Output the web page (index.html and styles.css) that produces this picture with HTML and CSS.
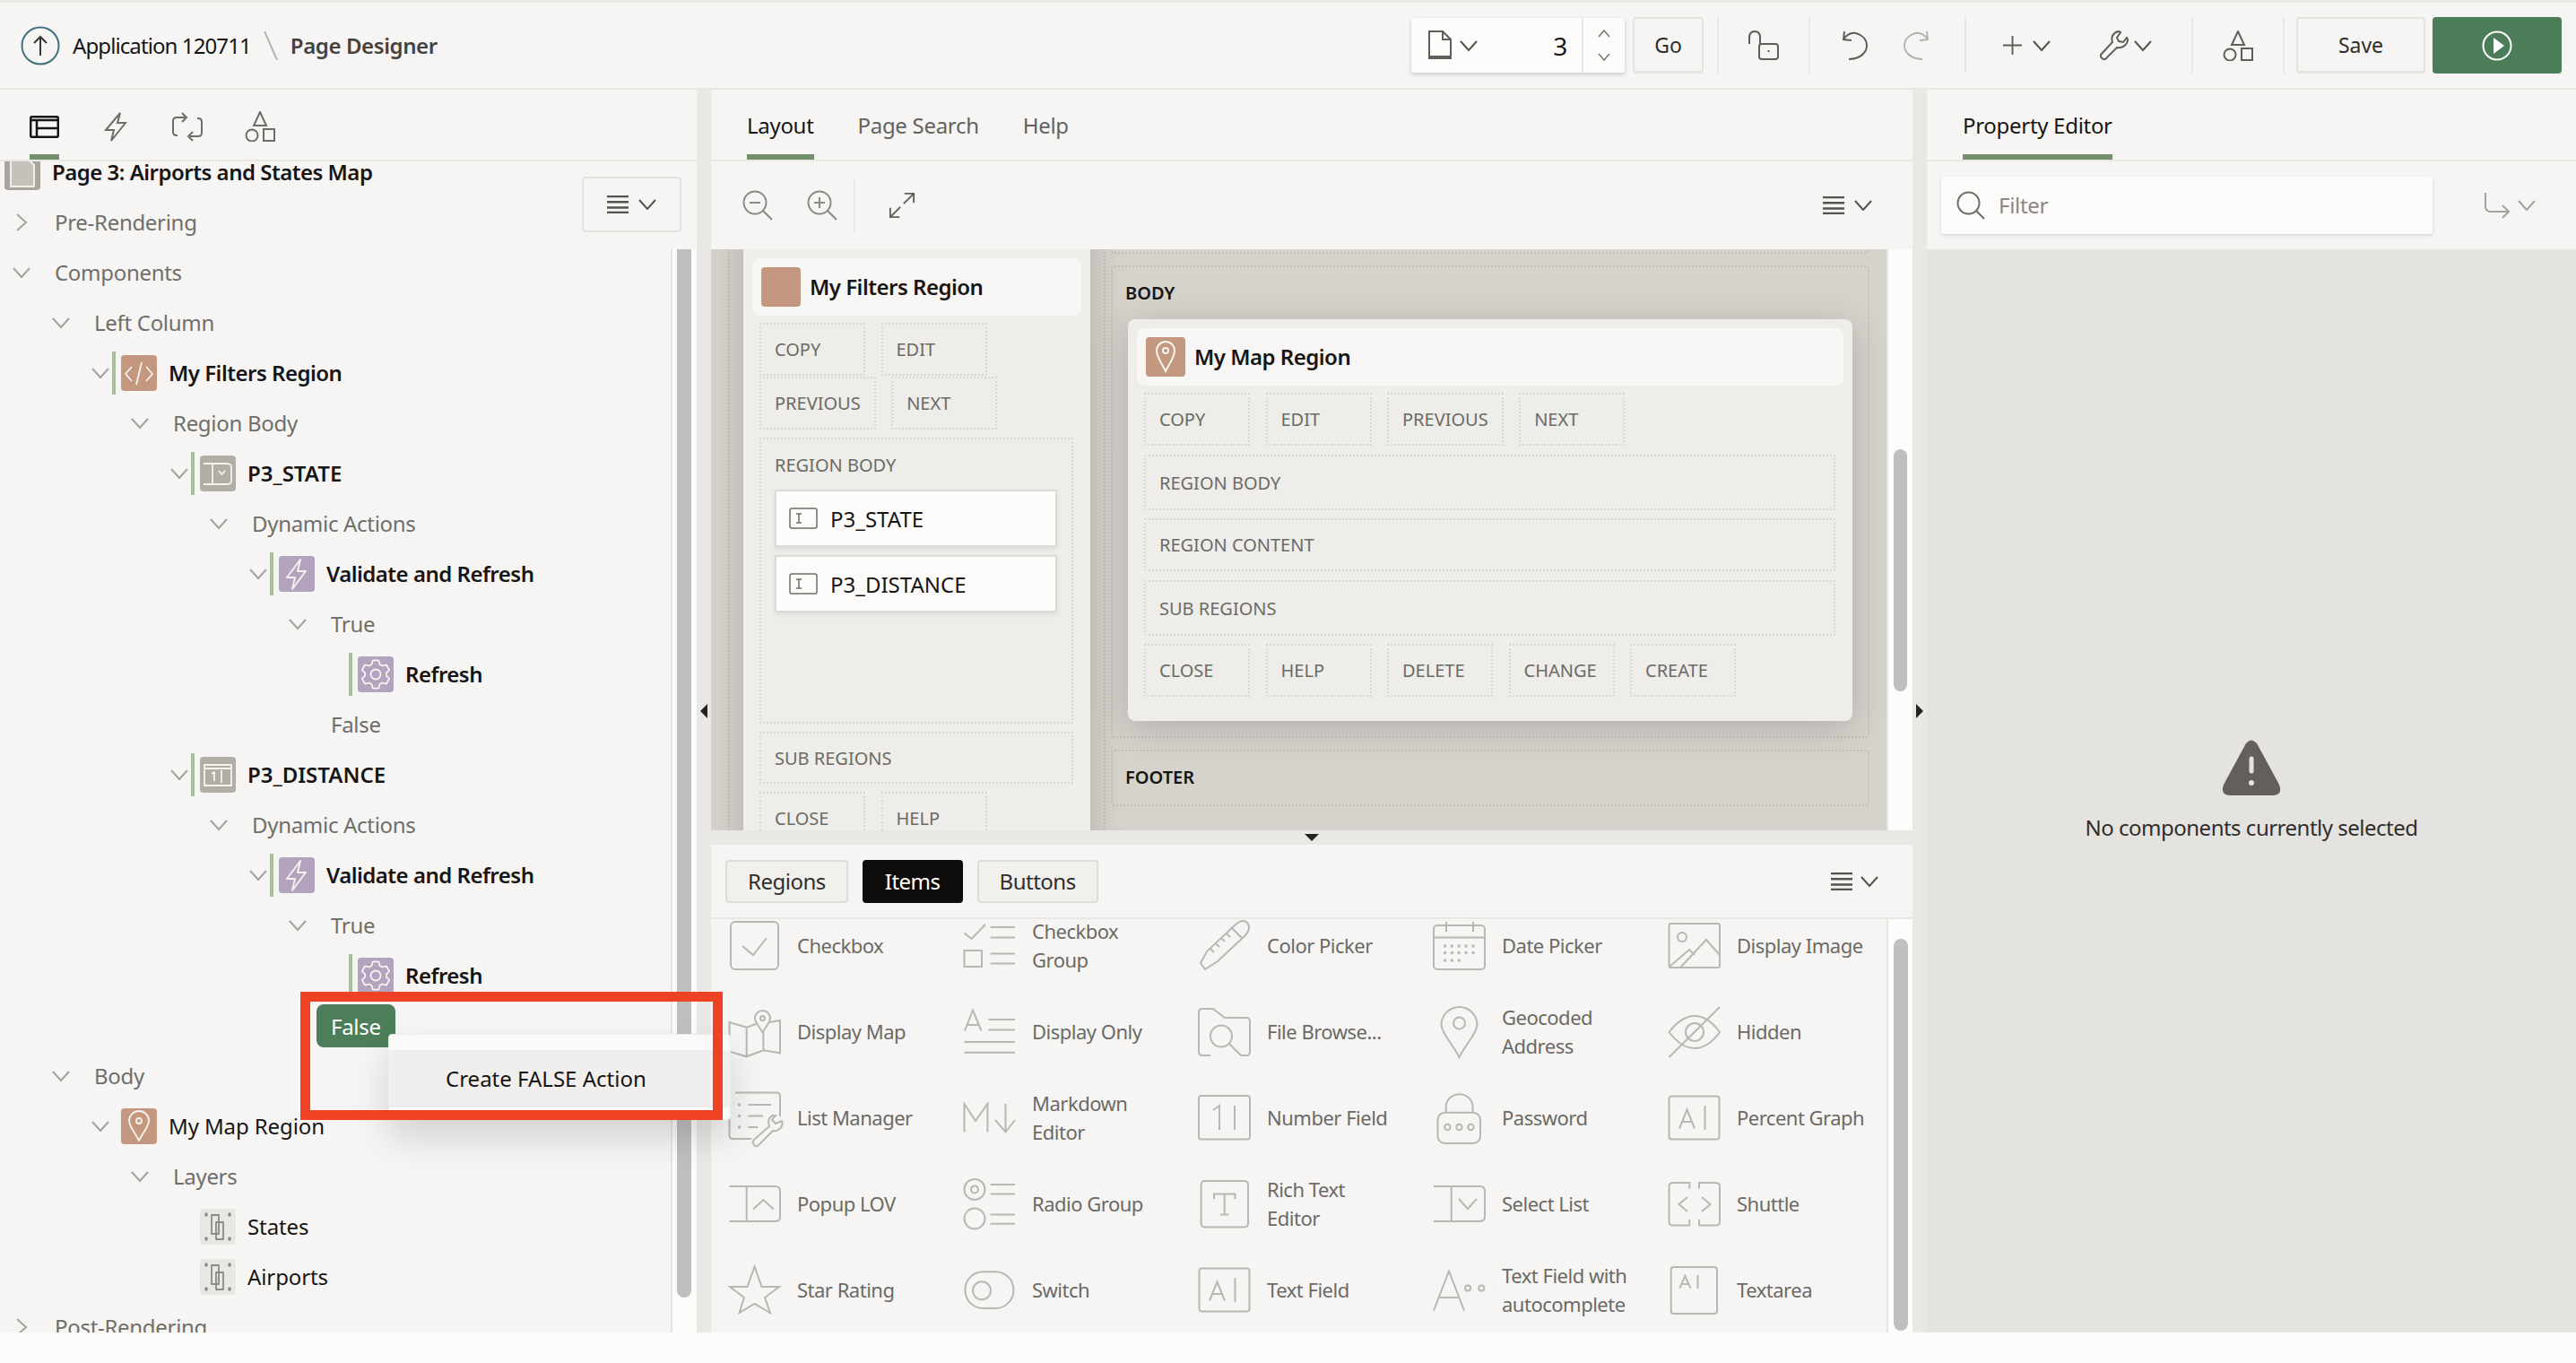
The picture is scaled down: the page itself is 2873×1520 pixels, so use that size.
FILE: index.html
```html
<!DOCTYPE html>
<html lang="en">
<head>
    <meta charset="UTF-8">
    <title>Page Designer</title>
    <link rel="stylesheet" href="styles.css">
</head>
<body>

    <svg class="defs" width="0" height="0">
        <symbol id="chev-d" viewBox="0 0 20 12"><path d="M1 1l9 10 9-10"/></symbol>
        <symbol id="chev-r" viewBox="0 0 12 20"><path d="M1 1l10 9-10 9"/></symbol>
        <symbol id="burger" viewBox="0 0 24 20"><path d="M0 1h24M0 7.300h24M0 13.600h24M0 19h24"/></symbol>
        <symbol id="t-region" viewBox="0 0 40 40"><path d="M12 13l-7 8 7 8M28 13l7 8-7 8M23 8l-6 25"/></symbol>
        <symbol id="t-pin" viewBox="0 0 40 40"><path d="M20 36C16 28 9 20 9 14a11 11 0 0 1 22 0c0 6-7 14-11 22z"/><circle cx="20" cy="14" r="3"/></symbol>
        <symbol id="t-select" viewBox="0 0 40 40"><path d="M4 9h26q5 0 5 4v15q0 4-5 4H4M14 9v23M21 17l3.500 4 3.500-4"/></symbol>
        <symbol id="t-number" viewBox="0 0 40 40"><path d="M5 9h30v23H5zM5 13h30M13 19l3-2v10M24 15v14"/></symbol>
        <symbol id="t-bolt" viewBox="0 0 40 40"><path d="M24 4L9 24h9l-3 13 15-20h-9z"/></symbol>
        <symbol id="t-gear" viewBox="0 0 40 40"><path d="M16.700 4.400L23.300 4.400 24.500 8.900 27.400 10.500 31.900 9.300 35.200 15.100 31.900 18.300 31.900 21.700 35.200 24.900 31.900 30.700 27.400 29.500 24.500 31.100 23.300 35.600 16.700 35.600 15.500 31.100 12.600 29.500 8.100 30.700 4.800 24.900 8.100 21.700 8.100 18.300 4.800 15.100 8.100 9.300 12.600 10.500 15.500 8.900z"/><circle cx="20" cy="20" r="5.500"/></symbol>
        <symbol id="t-layer" viewBox="0 0 40 40"><path d="M13 7h8v21h-8zM18 15h8v19h-8z"/><path class="dots" d="M7 6v1M33 6v1M7 33v1M33 33v1"/></symbol>
        <symbol id="t-field" viewBox="0 0 32 24"><rect x="1" y="1" width="30" height="22" rx="2"/><path d="M8 7h6M8 17h6M11 7v10"/></symbol>
        <symbol id="a-box" viewBox="0 0 60 70"><rect x="1.500" y="10.500" width="56" height="48" rx="3"/><path d="M13 46.500l8.500-21 8.500 21M16 39h11M41.500 21v27"/></symbol>
    </svg>

    <header class="topbar">
        <svg class="up-circle" width="44" height="44" viewBox="0 0 44 44"><circle cx="22" cy="22" r="20.500"/><path d="M22 33V12M15 19l7-7 7 7"/></svg>
        <span class="crumb">Application 120711</span>
        <svg class="crumb-sep" width="16" height="32" viewBox="0 0 16 32"><path d="M1 0l14 32"/></svg>
        <span class="crumb-page">Page Designer</span>

        <div class="spacer"></div>

        <div class="pagebox">
            <svg class="ico" width="26" height="33" viewBox="0 0 26 33"><path d="M1 1h15l9 9v21H1zM16 1v9h9M1 29h24"/></svg>
            <svg class="small-chev" width="20" height="12"><use href="#chev-d"/></svg>
            <span class="pagenum">3</span>
            <div class="spin">
                <svg width="14" height="9" viewBox="0 0 14 9"><path d="M1 8l6-7 6 7"/></svg>
                <svg width="14" height="9" viewBox="0 0 14 9"><path d="M1 1l6 7 6-7"/></svg>
            </div>
        </div>
        <button class="btn btn-go">Go</button>
        <div class="tool-sep"></div>
        <div class="slot slot-lock">
            <svg class="ico" width="34" height="33" viewBox="0 0 34 33"><path d="M1 15V8q0-7 6-7t6 7v7"/><rect x="12" y="15" width="21" height="17" rx="3"/><path d="M22.500 22v2"/></svg>
        </div>
        <div class="tool-sep"></div>
        <div class="slot slot-undo">
            <svg class="ico" width="32" height="33" viewBox="0 0 32 33"><path d="M5 1l-1 9 9 1M4 10C8 4 13 2 18 3c7 2 12 7 12 14s-7 15-20 15"/></svg>
            <svg class="ico off" width="32" height="33" viewBox="0 0 32 33"><path d="M27 1l1 9-9 1M28 10C24 4 19 2 14 3 7 5 2 10 2 17s7 15 20 15"/></svg>
        </div>
        <div class="tool-sep"></div>
        <div class="slot slot-add">
            <svg class="ico" width="21" height="21" viewBox="0 0 22 22"><path d="M11 0v22M0 11h22"/></svg>
            <svg class="small-chev chev-add" width="20" height="12"><use href="#chev-d"/></svg>
            <svg class="ico ico-wrench" width="34" height="33" viewBox="0 0 34 33"><path d="M2 27l13-14c-2-6 1-11 7-12l2 1-4 6 2 4 5 1 4-5 1 2c0 6-6 10-12 9L7 32c-2 1-6-2-5-5z"/></svg>
            <svg class="small-chev" width="20" height="12"><use href="#chev-d"/></svg>
        </div>
        <div class="tool-sep"></div>
        <div class="slot slot-lock">
            <svg class="ico" width="34" height="34" viewBox="0 0 34 34"><path d="M17 1l7 15H10zM21 20h12v13H21z"/><circle cx="8" cy="27" r="6.500"/></svg>
        </div>
        <div class="tool-sep"></div>
        <button class="btn btn-save">Save</button>
        <button class="btn-run">
            <svg width="34" height="34" viewBox="0 0 34 34"><circle cx="17" cy="17" r="15.500"/><path class="fill" d="M13 8l12 9-12 9z"/></svg>
        </button>
    </header>

    <main class="workspace">

        <section class="panel">
            <div class="tabs tabs-icons">
                <div class="tab active">
                    <svg width="33" height="25" viewBox="0 0 33 25"><rect x="1.200" y="1.200" width="30.600" height="22.600" rx="1.500"/><path d="M1 5h31M8 5v19M8 14h24"/></svg>
                </div>
                <div class="tab">
                    <svg class="grey" width="26" height="33" viewBox="0 0 26 33"><path d="M18 1L2 20h9L8 32 24 12h-9z"/></svg>
                </div>
                <div class="tab">
                    <svg class="grey" width="34" height="33" viewBox="0 0 34 33"><path d="M14 6H5Q1 6 1 10v12q0 4 4 4h1M20 27h9q4 0 4-4V11q0-4-4-4h-1M11 1l5 5-5 5M23 22l-5 5 5 5"/></svg>
                </div>
                <div class="tab">
                    <svg class="grey" width="34" height="34" viewBox="0 0 34 34"><path d="M17 1l7 15H10zM21 20h12v13H21z"/><circle cx="8" cy="27" r="6.500"/></svg>
                </div>
            </div>

            <div class="tree-wrap">
                <ul class="tree root">
                    <li>
                        <div class="row row-page">
                            <span class="tile tile-page"><svg width="40" height="40" viewBox="0 0 40 40"><path d="M7 3h17l9 9v24H7z"/></svg></span>
                            <span class="strong">Page 3: Airports and States Map</span>
                        </div>
                    </li>
                    <li><div class="row"><svg class="chev chev-side"><use href="#chev-r"/></svg><span class="lbl">Pre-Rendering</span></div></li>
                    <li>
                        <div class="row"><svg class="chev"><use href="#chev-d"/></svg><span class="lbl">Components</span></div>
                        <ul class="tree">
                            <li>
                                <div class="row"><svg class="chev"><use href="#chev-d"/></svg><span class="lbl">Left Column</span></div>
                                <ul class="tree">
                                    <li>
                                        <div class="row has-tile"><svg class="chev"><use href="#chev-d"/></svg><i class="bar"></i><span class="tile tile-region"><svg width="40" height="40"><use href="#t-region"/></svg></span><span class="strong">My Filters Region</span></div>
                                        <ul class="tree">
                                            <li>
                                                <div class="row"><svg class="chev"><use href="#chev-d"/></svg><span class="lbl">Region Body</span></div>
                                                <ul class="tree">
                                                    <li>
                                                        <div class="row has-tile"><svg class="chev"><use href="#chev-d"/></svg><i class="bar"></i><span class="tile tile-item"><svg width="40" height="40"><use href="#t-select"/></svg></span><span class="strong item-name">P3_STATE</span></div>
                                                        <ul class="tree">
                                                            <li>
                                                                <div class="row"><svg class="chev"><use href="#chev-d"/></svg><span class="lbl">Dynamic Actions</span></div>
                                                                <ul class="tree">
                                                                    <li>
                                                                        <div class="row has-tile"><svg class="chev"><use href="#chev-d"/></svg><i class="bar"></i><span class="tile tile-da"><svg width="40" height="40"><use href="#t-bolt"/></svg></span><span class="strong">Validate and Refresh</span></div>
                                                                        <ul class="tree">
                                                                            <li>
                                                                                <div class="row"><svg class="chev"><use href="#chev-d"/></svg><span class="lbl">True</span></div>
                                                                                <ul class="tree">
                                                                                    <li><div class="row has-tile"><span class="chev-none"></span><i class="bar"></i><span class="tile tile-da"><svg width="40" height="40"><use href="#t-gear"/></svg></span><span class="strong">Refresh</span></div></li>
                                                                                </ul>
                                                                            </li>
                                                                            <li><div class="row"><span class="chev-none"></span><span class="lbl">False</span></div></li>
                                                                        </ul>
                                                                    </li>
                                                                </ul>
                                                            </li>
                                                        </ul>
                                                    </li>
                                                    <li>
                                                        <div class="row has-tile"><svg class="chev"><use href="#chev-d"/></svg><i class="bar"></i><span class="tile tile-item"><svg width="40" height="40"><use href="#t-number"/></svg></span><span class="strong item-name">P3_DISTANCE</span></div>
                                                        <ul class="tree">
                                                            <li>
                                                                <div class="row"><svg class="chev"><use href="#chev-d"/></svg><span class="lbl">Dynamic Actions</span></div>
                                                                <ul class="tree">
                                                                    <li>
                                                                        <div class="row has-tile"><svg class="chev"><use href="#chev-d"/></svg><i class="bar"></i><span class="tile tile-da"><svg width="40" height="40"><use href="#t-bolt"/></svg></span><span class="strong">Validate and Refresh</span></div>
                                                                        <ul class="tree">
                                                                            <li>
                                                                                <div class="row"><svg class="chev"><use href="#chev-d"/></svg><span class="lbl">True</span></div>
                                                                                <ul class="tree">
                                                                                    <li><div class="row has-tile"><span class="chev-none"></span><i class="bar"></i><span class="tile tile-da"><svg width="40" height="40"><use href="#t-gear"/></svg></span><span class="strong">Refresh</span></div></li>
                                                                                </ul>
                                                                            </li>
                                                                            <li><div class="row"><span class="chev-none"></span><span class="pill">False</span></div></li>
                                                                        </ul>
                                                                    </li>
                                                                </ul>
                                                            </li>
                                                        </ul>
                                                    </li>
                                                </ul>
                                            </li>
                                        </ul>
                                    </li>
                                </ul>
                            </li>
                            <li>
                                <div class="row"><svg class="chev"><use href="#chev-d"/></svg><span class="lbl">Body</span></div>
                                <ul class="tree">
                                    <li>
                                        <div class="row has-tile"><svg class="chev"><use href="#chev-d"/></svg><i class="bar bar-off"></i><span class="tile tile-region"><svg width="40" height="40"><use href="#t-pin"/></svg></span><span class="plain">My Map Region</span></div>
                                        <ul class="tree">
                                            <li>
                                                <div class="row"><svg class="chev"><use href="#chev-d"/></svg><span class="lbl">Layers</span></div>
                                                <ul class="tree">
                                                    <li><div class="row has-tile"><span class="chev-none"></span><i class="bar bar-off"></i><span class="tile tile-layer"><svg width="40" height="40"><use href="#t-layer"/></svg></span><span class="plain">States</span></div></li>
                                                    <li><div class="row has-tile"><span class="chev-none"></span><i class="bar bar-off"></i><span class="tile tile-layer"><svg width="40" height="40"><use href="#t-layer"/></svg></span><span class="plain">Airports</span></div></li>
                                                </ul>
                                            </li>
                                        </ul>
                                    </li>
                                </ul>
                            </li>
                        </ul>
                    </li>
                    <li><div class="row"><svg class="chev chev-side"><use href="#chev-r"/></svg><span class="lbl">Post-Rendering</span></div></li>
                </ul>
                <button class="menu-btn"><svg class="burger" width="24" height="20"><use href="#burger"/></svg><svg class="small-chev" width="20" height="12"><use href="#chev-d"/></svg></button>
                <div class="track track-tree"><div class="thumb"></div></div>
            </div>
        </section>

        <div class="gutter-v"><i class="tri-left"></i></div>

        <section class="center">
            <div class="tabs">
                <div class="tab active"><span>Layout</span></div>
                <div class="tab"><span>Page Search</span></div>
                <div class="tab"><span>Help</span></div>
            </div>
            <div class="canvas-tools">
                <svg class="ico ico-off" width="34" height="34" viewBox="0 0 34 34"><circle cx="14" cy="14" r="12.500"/><path d="M23 23l10 10M8 14h12"/></svg>
                <svg class="ico ico-off" width="34" height="34" viewBox="0 0 34 34"><circle cx="14" cy="14" r="12.500"/><path d="M23 23l10 10M8 14h12M14 8v12"/></svg>
                <div class="tools-sep"></div>
                <svg class="ico" width="30" height="30" viewBox="0 0 32 32"><path d="M19 2h11v11M30 2L18 14M13 30H2V19M2 30l12-12"/></svg>
                <div class="spacer"></div>
                <svg class="burger" width="24" height="20"><use href="#burger"/></svg>
                <svg class="small-chev" width="20" height="12"><use href="#chev-d"/></svg>
            </div>

            <div class="canvas-row">
                <div class="canvas">
                    <div class="slot-left">
                        <div class="region region-left">
                            <div class="region-head"><span class="swatch"></span><span>My Filters Region</span></div>
                            <div class="drops">
                                <div class="drop">Copy</div>
                                <div class="drop">Edit</div>
                                <div class="drop">Previous</div>
                                <div class="drop">Next</div>
                            </div>
                            <div class="zone zone-body">
                                <div class="zone-title">Region Body</div>
                                <div class="item"><svg width="32" height="24"><use href="#t-field"/></svg><span>P3_STATE</span></div>
                                <div class="item"><svg width="32" height="24"><use href="#t-field"/></svg><span>P3_DISTANCE</span></div>
                            </div>
                            <div class="zone zone-sub">Sub Regions</div>
                            <div class="drops">
                                <div class="drop">Close</div>
                                <div class="drop">Help</div>
                            </div>
                        </div>
                    </div>
                    <div class="slot-main">
                        <div class="page-slot slot-top"></div>
                        <div class="page-slot slot-body">
                            <div class="slot-title">Body</div>
                            <div class="region region-map">
                                <div class="region-head"><span class="swatch"><svg width="44" height="44" viewBox="0 0 44 44"><path d="M22 38C18 30 12 22 12 15a10 10 0 0 1 20 0c0 7-6 15-10 23z"/><circle cx="22" cy="15" r="3"/></svg></span><span>My Map Region</span></div>
                                <div class="drops">
                                    <div class="drop">Copy</div>
                                    <div class="drop">Edit</div>
                                    <div class="drop">Previous</div>
                                    <div class="drop">Next</div>
                                </div>
                                <div class="zone zone-62">Region Body</div>
                                <div class="zone zone-59">Region Content</div>
                                <div class="zone zone-62">Sub Regions</div>
                                <div class="drops">
                                    <div class="drop">Close</div>
                                    <div class="drop">Help</div>
                                    <div class="drop">Delete</div>
                                    <div class="drop">Change</div>
                                    <div class="drop">Create</div>
                                </div>
                            </div>
                        </div>
                        <div class="page-slot slot-footer"><div class="slot-title">Footer</div></div>
                    </div>
                </div>
                <div class="track track-canvas"><div class="thumb"></div></div>
            </div>

            <div class="gutter-h"><i class="tri-down"></i></div>

            <div class="gallery">
                <div class="gallery-tabs">
                    <button class="pick">Regions</button>
                    <button class="pick pick-on">Items</button>
                    <button class="pick">Buttons</button>
                    <div class="spacer"></div>
                    <svg class="burger" width="24" height="20"><use href="#burger"/></svg>
                    <svg class="small-chev" width="20" height="12"><use href="#chev-d"/></svg>
                </div>
                <div class="gallery-body">
                    <div class="grid">
                        <div class="cell"><svg class="gi" viewBox="0 0 60 70"><rect x="3" y="8" width="53" height="53" rx="5"/><path d="M16 35l12 10 15-19"/></svg><span>Checkbox</span></div>
                        <div class="cell"><svg class="gi" viewBox="0 0 60 70"><path d="M1.500 20.500l8 6.500L25 11M30.500 14H58M30.500 25.500H58M30.500 43.500H58M30.500 54.600H58"/><rect x="1.500" y="40" width="19.500" height="18"/></svg><span>Checkbox Group</span></div>
                        <div class="cell"><svg class="gi" viewBox="0 0 60 70"><path d="M3 54l7-13L42 11q8-7 13-2 5 6-2 14L22 52 8 61zM37 14l13 13M14 38l4 4M20 32l4 4M26 26l4 4M32 21l4 4"/></svg><span>Color Picker</span></div>
                        <div class="cell"><svg class="gi" viewBox="0 0 60 70"><rect x="1" y="12" width="57" height="49" rx="4"/><path d="M1 25.500h57M15 8v11M45 8v11"/><path class="dots" d="M13.600 35v.1M21.400 35v.1M29.200 35v.1M37 35v.1M45 35v.1M13.600 42.500v.1M21.400 42.500v.1M29.200 42.500v.1M37 42.500v.1M45 42.500v.1M13.600 51v.1M21.400 51v.1M29.200 51v.1"/></svg><span>Date Picker</span></div>
                        <div class="cell"><svg class="gi" viewBox="0 0 60 70"><rect x="1.500" y="10" width="56.500" height="49" rx="2"/><circle cx="16" cy="25" r="5"/><path d="M2 58l22-19 6 6M14 59l29-31 15 17"/></svg><span>Display Image</span></div>

                        <div class="cell"><svg class="gi" viewBox="0 0 60 70"><path d="M1.500 24l19.200 5.800v32.500L1.500 56.600zM20.700 29.800L31 26M20.700 62.300l18.700-7 18.600 3V22l-12 2M39.400 35v20.300"/><path d="M38.500 35.500c-3-6-8.500-11-8.500-16a8.500 8.500 0 0 1 17 0c0 5-5.500 10-8.500 16z"/><circle cx="38.500" cy="19.500" r="2.500"/></svg><span>Display Map</span></div>
                        <div class="cell"><svg class="gi" viewBox="0 0 60 70"><path d="M2 33.500L11 10.700l9.500 22.800M5 27h12M28.300 21H58M28.300 32.500H58M1.500 46H58M1.500 57.700H58"/></svg><span>Display Only</span></div>
                        <div class="cell"><svg class="gi" viewBox="0 0 60 70"><path d="M14 61H5q-4 0-4-4V13q0-4 4-4h12l13 10h24q4 0 4 4v34q0 4-4 4h-6"/><circle cx="26" cy="39.500" r="12"/><path d="M35 48l13 13"/></svg><span>File Browse...</span></div>
                        <div class="cell"><svg class="gi" viewBox="0 0 60 70"><path d="M29.500 63C22 48 9.500 36 9.500 27a20 20 0 0 1 40 0c0 9-12.500 21-20 36z"/><circle cx="29.500" cy="25" r="6.500"/></svg><span>Geocoded Address</span></div>
                        <div class="cell"><svg class="gi" viewBox="0 0 60 70"><path d="M1.500 35C10 24 20 17 30 17s20 7 28 18c-8 11-18 18-28 18S10 46 1.500 35zM1.500 63L58 7"/><circle cx="30" cy="35" r="10"/></svg><span>Hidden</span></div>

                        <div class="cell"><svg class="gi" viewBox="0 0 60 70"><path d="M8 6.500h46q4 0 4 4V33M1.500 12v42q0 4 4 4H26M22.500 20H48M22.500 32.500H39M22.500 45H33"/><path class="dots" d="M12.600 20v.1M12.600 32.500v.1M12.600 45v.1"/><path d="M30 66q-4-4-1-7l17-15q-3-9 4-12h3l-4 5 4 4 7-3q2 6-4 10-3 2-6 1L34 65q-2 2-4 1z"/></svg><span>List Manager</span></div>
                        <div class="cell"><svg class="gi" viewBox="0 0 60 70"><path d="M1.500 50.500V19L14 38 27.400 19v31.500M47.500 19v31.500M36 37l11.500 13.500L58 37"/></svg><span>Markdown Editor</span></div>
                        <div class="cell"><svg class="gi" viewBox="0 0 60 70"><rect x="1" y="10" width="57" height="48.500" rx="3"/><path d="M17 26l7-5v27M41 21v27"/></svg><span>Number Field</span></div>
                        <div class="cell"><svg class="gi" viewBox="0 0 60 70"><rect x="5.500" y="28.700" width="47.500" height="34.300" rx="8"/><path d="M14.700 28.700V21a15 14.500 0 0 1 29.800 0v7.700"/><circle cx="16.400" cy="45" r="3.200"/><circle cx="29.400" cy="45" r="3.200"/><circle cx="42.400" cy="45" r="3.200"/></svg><span>Password</span></div>
                        <div class="cell"><svg class="gi" viewBox="0 0 60 70"><use href="#a-box"/></svg><span>Percent Graph</span></div>

                        <div class="cell"><svg class="gi" viewBox="0 0 60 70"><path d="M1.500 15H52q6 0 6 5v29q0 5-6 5H1.500M20.700 15v39M28 40.600L39.400 30l11.200 10.600"/></svg><span>Popup LOV</span></div>
                        <div class="cell"><svg class="gi" viewBox="0 0 60 70"><circle cx="13" cy="18.400" r="11.500"/><circle cx="13" cy="18.400" r="4"/><circle cx="13" cy="51" r="11.500"/><path d="M30.500 13H58M30.500 23.400H58M30.500 46.400H58M30.500 56.700H58"/></svg><span>Radio Group</span></div>
                        <div class="cell"><svg class="gi" viewBox="0 0 60 70"><rect x="3.600" y="9" width="52.400" height="51.500" rx="4"/><path d="M18 29v-5.600h23.500V29M29.700 23.400v23M25 46.400h9.400"/></svg><span>Rich Text Editor</span></div>
                        <div class="cell"><svg class="gi" viewBox="0 0 60 70"><path d="M1 15h51q6 0 6 5v29q0 5-6 5H1M20.700 15v39M29 29l10 11 10-11"/></svg><span>Select List</span></div>
                        <div class="cell"><svg class="gi" viewBox="0 0 60 70"><path d="M24.300 17.500V11H6q-4.500 0-4.500 4v39.500q0 4 4.500 4h18.300V52M35 17.500V11h18.500q4.500 0 4.500 4v39.500q0 4-4.500 4H35V52M22 27l-9.500 8L22 43M38 27l9.500 8L38 43"/></svg><span>Shuttle</span></div>

                        <div class="cell"><svg class="gi" viewBox="0 0 60 70"><path d="M29.600 8.500L37.500 31H57L41 43l6 17-17.400-10-17.100 10L18 43 2 31h19.500z"/></svg><span>Star Rating</span></div>
                        <div class="cell"><svg class="gi" viewBox="0 0 60 70"><rect x="2.400" y="14.300" width="54" height="40.700" rx="20"/><circle cx="21" cy="35.300" r="10"/></svg><span>Switch</span></div>
                        <div class="cell"><svg class="gi" viewBox="0 0 60 70"><use href="#a-box"/></svg><span>Text Field</span></div>
                        <div class="cell"><svg class="gi" viewBox="0 0 60 70"><path d="M1 57.500L18 13.500l17 44M7 43h22"/><circle cx="39" cy="32.600" r="3"/><circle cx="54.300" cy="32.600" r="3"/></svg><span>Text Field with autocomplete</span></div>
                        <div class="cell"><svg class="gi" viewBox="0 0 60 70"><rect x="3.700" y="9" width="51.300" height="52" rx="3"/><path d="M13.400 32.600L19.400 19l6 13.600M15.500 28h8M33.500 18v15"/></svg><span>Textarea</span></div>
                    </div>
                    <div class="track track-gallery"><div class="thumb"></div></div>
                </div>
            </div>
        </section>

        <div class="gutter-v"><i class="tri-right"></i></div>

        <section class="panel panel-right">
            <div class="tabs">
                <div class="tab active"><span>Property Editor</span></div>
            </div>
            <div class="filter-row">
                <div class="filter">
                    <svg class="ico-search" width="32" height="32" viewBox="0 0 32 32"><circle cx="13.500" cy="13.500" r="12"/><path d="M22 22l9 9"/></svg>
                    <span>Filter</span>
                </div>
                <svg class="go-icon" width="30" height="30" viewBox="0 0 30 30"><path d="M2 1v15q0 6 6 6h20M21 15l7 7-7 7"/></svg>
                <svg class="small-chev off-chev" width="20" height="12"><use href="#chev-d"/></svg>
            </div>
            <div class="props-empty">
                <svg width="66" height="62" viewBox="0 0 66 62"><path class="warn" d="M27 4q6-7 12 0l25 46q4 11-6 12H8q-10-1-6-12z"/><path class="warn-mark" d="M33 21v14"/><circle class="warn-dot" cx="33" cy="48" r="3"/></svg>
                <p>No components currently selected</p>
            </div>
        </section>
    </main>

    <div class="footer-strip"></div>

    <div class="context-menu">
        <div class="context-item">Create FALSE Action</div>
    </div>
    <div class="callout"></div>

</body>
</html>
```

FILE: styles.css
```css
* {
    box-sizing: border-box;
}
html, body {
    margin: 0;
    padding: 0;
}
body {
    width: 2873px;
    height: 1520px;
    overflow: hidden;
    position: relative;
    font-family: "Noto Sans", "Open Sans", sans-serif;
    font-size: 24px;
    letter-spacing: -0.3px;
    color: #161513;
    background-color: #f6f5f3;
}
button {
    font-family: inherit;
    cursor: pointer;
}
ul {
    list-style: none;
    margin: 0;
    padding: 0;
}
svg {
    flex: none;
    fill: none;
}
.defs {
    position: absolute;
}
.spacer {
    flex: 1;
}
.dots {
    stroke-linecap: round;
    stroke-width: 3.500;
}

/* shared icon strokes */
.ico path, .ico circle, .ico rect {
    stroke: #5f5e5a;
    stroke-width: 2;
}
.ico.off path {
    stroke: #b4b3af;
}
.ico-off path, .ico-off circle {
    stroke: #8a8985;
    stroke-width: 2;
}
.small-chev {
    stroke: #55534f;
    stroke-width: 2;
}
.burger {
    stroke: #55534f;
    stroke-width: 2.500;
}

/* top bar */
.topbar {
    height: 100px;
    display: flex;
    align-items: center;
    padding-left: 23px;
    padding-right: 16px;
    border-top: 3px solid #e8e7e4;
    border-bottom: 2px solid #e8e7e4;
}
.up-circle circle {
    stroke: #417080;
    stroke-width: 2;
}
.up-circle path {
    stroke: #3b3935;
    stroke-width: 2;
}
.crumb {
    margin-left: 14px;
    letter-spacing: -0.9px;
}
.crumb-sep {
    margin: 0 14px;
    stroke: #b5b4b0;
    stroke-width: 2;
}
.crumb-page {
    font-weight: 600;
    color: #45423e;
    letter-spacing: -0.4px;
}
.pagebox {
    width: 238px;
    height: 61px;
    display: flex;
    align-items: center;
    padding-left: 19px;
    background: #fdfcfb;
    border-radius: 3px;
    box-shadow: 0 2px 5px rgba(0, 0, 0, .18);
}
.pagebox .small-chev {
    margin-left: 9px;
}
.pagenum {
    margin-left: auto;
    margin-right: 16px;
    font-size: 28px;
}
.spin {
    width: 48px;
    height: 100%;
    border-left: 2px solid #e8e7e4;
    display: flex;
    flex-direction: column;
    align-items: center;
    justify-content: space-between;
    padding: 13px 0;
    stroke: #77766f;
    stroke-width: 1.500;
}
.btn {
    height: 63px;
    background: transparent;
    border: 2px solid #e4e3e0;
    border-bottom-width: 3px;
    border-radius: 4px;
    font-size: 23px;
    color: #312d2a;
}
.btn-go {
    width: 79px;
    margin-left: 9px;
    margin-right: 15px;
}
.tool-sep {
    width: 2px;
    height: 63px;
    background: #e8e7e4;
}
.slot {
    height: 63px;
    display: flex;
    align-items: center;
}
.slot-lock {
    width: 100px;
    justify-content: center;
}
.slot-undo {
    width: 172px;
    padding-left: 33px;
    gap: 38px;
}
.slot-add {
    width: 251px;
    padding-left: 41px;
}
.chev-add {
    margin-left: 12px;
}
.ico-wrench {
    margin-left: 54px;
    margin-right: 5px;
}
.btn-save {
    width: 144px;
    margin-left: 13px;
}
.btn-run {
    width: 144px;
    height: 63px;
    margin-left: 8px;
    background: #4b7d58;
    border: none;
    border-radius: 4px;
    display: flex;
    align-items: center;
    justify-content: center;
}
.btn-run circle {
    stroke: #fff;
    stroke-width: 2;
}
.btn-run .fill {
    fill: #fff;
}

/* panels */
.workspace {
    height: 1386px;
    display: grid;
    grid-template-columns: 777px 16px 1340px 16px 724px;
    grid-template-rows: 1386px;
}
.panel, .center {
    display: flex;
    flex-direction: column;
    min-width: 0;
    overflow: hidden;
}
.tabs {
    flex: none;
    height: 80px;
    display: flex;
    gap: 49px;
    padding-left: 40px;
    border-bottom: 2px solid #e8e7e4;
}
.tab {
    height: 78px;
    display: flex;
    align-items: center;
    color: #63625e;
    border-bottom: 6px solid transparent;
    padding-top: 6px;
}
.tab.active {
    color: #161513;
    border-bottom-color: #72906a;
}
.tabs-icons {
    padding-left: 33px;
    gap: 50px;
}
.tabs-icons .tab:last-child {
    margin-left: -3px;
}
.tab svg {
    stroke: #161513;
    stroke-width: 2.500;
    position: relative;
    top: 2px;
}
.tab svg.grey {
    stroke: #6d6c68;
    stroke-width: 2;
}
.gutter-v {
    background: #e9e8e5;
    display: flex;
    align-items: center;
    justify-content: center;
}
.tri-left {
    border-top: 8px solid transparent;
    border-bottom: 8px solid transparent;
    border-right: 8px solid #252320;
}
.tri-right {
    border-top: 8px solid transparent;
    border-bottom: 8px solid transparent;
    border-left: 8px solid #252320;
}

/* component tree */
.tree-wrap {
    flex: 1;
    position: relative;
    overflow: hidden;
}
.root {
    margin-top: -16px;
}
.tree .tree {
    padding-left: 44px;
}
.row {
    height: 56px;
    display: flex;
    align-items: center;
    padding-left: 14px;
    white-space: nowrap;
}
.chev {
    width: 20px;
    height: 12px;
    stroke: #a3a29e;
    stroke-width: 2;
}
.chev-side {
    height: 20px;
}
.chev-none {
    width: 20px;
}
.lbl {
    margin-left: 27px;
    margin-bottom: 2px;
    color: #6f6e6a;
}
.bar {
    width: 4px;
    height: 48px;
    margin-left: 3px;
    margin-right: 6px;
    background: #a9bf9e;
}
.bar-off {
    background: transparent;
}
.tile {
    width: 40px;
    height: 40px;
    border-radius: 4px;
    margin-right: 13px;
    flex: none;
}
.tile svg {
    display: block;
    stroke: #f7f3ef;
    stroke-width: 1.800;
    stroke-linejoin: round;
}
.tile-region {
    background: #c4977f;
}
.tile-item {
    background: #b0aea7;
}
.tile-da {
    background: #b3a3bf;
}
.tile-layer {
    background: #e8e7e4;
}
.tile-layer svg {
    stroke: #8b8a86;
}
.tile-page {
    background: #a8a59d;
}
.tile-page svg {
    fill: #c4c2ba;
    stroke: #f0efeb;
    stroke-width: 2;
}
.row-page {
    padding-left: 5px;
}
.row-page .tile {
    margin-right: 13px;
}
.strong {
    font-weight: 600;
    margin-bottom: 2px;
    letter-spacing: -0.5px;
}
.item-name {
    letter-spacing: 0;
}
.plain {
    margin-bottom: 2px;
    color: #161513;
    letter-spacing: -0.1px;
}
.pill {
    height: 48px;
    padding: 0 16px;
    display: flex;
    align-items: center;
    margin-left: 11px;
    color: #fff;
    background: #4c7f59;
    border-radius: 8px;
}
.menu-btn {
    position: absolute;
    left: 649px;
    top: 17px;
    width: 111px;
    height: 62px;
    display: flex;
    align-items: center;
    justify-content: center;
    gap: 11px;
    background: #f6f5f3;
    border: 2px solid #e4e3e0;
    border-radius: 4px;
}
.track {
    background: #fcfcfb;
}
.thumb {
    background: #bfbfbf;
    border-radius: 0 0 9px 9px;
}
.track-tree {
    position: absolute;
    left: 748px;
    top: 98px;
    width: 29px;
    bottom: 0;
    border-left: 2px solid #e7e6e3;
    padding-left: 5px;
}
.track-tree .thumb {
    width: 16px;
    height: 1169px;
}

/* layout tab */
.canvas-tools {
    flex: none;
    height: 98px;
    display: flex;
    align-items: center;
    padding-left: 35px;
    padding-right: 45px;
}
.canvas-tools > svg:nth-child(2) {
    margin-left: 38px;
}
.tools-sep {
    width: 2px;
    height: 60px;
    margin-left: 18px;
    margin-right: 37px;
    background: #e8e7e4;
}
.canvas-tools .small-chev {
    margin-left: 11px;
}
.canvas-row {
    flex: none;
    height: 648px;
    display: flex;
}
.canvas {
    width: 1311px;
    padding-left: 19px;
    display: flex;
    align-items: flex-start;
    overflow: hidden;
    background: #d6d3cd;
}
.slot-left {
    flex: none;
    width: 421px;
    height: 800px;
    margin-top: -40px;
    padding: 0 15px;
    border: 2px dotted rgba(0, 0, 0, .09);
}
.region {
    background: #eeede9;
    border-radius: 8px;
    padding: 10px 19px 27px 18px;
    box-shadow: 0 8px 40px rgba(0, 0, 0, .18);
}
.region-left {
    height: 760px;
    padding-top: 48px;
    border-radius: 0 0 8px 8px;
}
.region-head {
    height: 64px;
    margin: 0 -9px 8px -8px;
    padding-left: 10px;
    display: flex;
    align-items: center;
    gap: 10px;
    font-weight: 600;
    letter-spacing: -0.5px;
    background: #f7f6f4;
    border-radius: 8px;
}
.region-head span:last-child {
    margin-bottom: 2px;
}
.swatch {
    width: 44px;
    height: 44px;
    border-radius: 4px;
    background: #c4977f;
}
.swatch svg {
    display: block;
    stroke: #f7f3ef;
    stroke-width: 2;
}
.drops {
    display: flex;
    flex-wrap: wrap;
    gap: 1px 17.500px;
    margin-bottom: 9px;
}
.region-map > .drops {
    margin-bottom: 10px;
}
.drop, .zone {
    font-size: 20px;
    letter-spacing: 0;
    text-transform: uppercase;
    color: #6b6a66;
    border: 2px dotted rgba(0, 0, 0, .09);
}
.drop {
    min-width: 118px;
    height: 59px;
    padding: 0 15px;
    display: flex;
    align-items: center;
}
.zone {
    padding: 0 15px;
    display: flex;
    align-items: center;
    margin-bottom: 9px;
}
.zone-body {
    height: 319px;
    flex-direction: column;
    align-items: stretch;
    justify-content: flex-start;
    padding-right: 16px;
}
.zone-title {
    height: 56px;
    display: flex;
    align-items: center;
}
.item {
    height: 64px;
    margin-bottom: 9px;
    padding-left: 14px;
    display: flex;
    align-items: center;
    gap: 14px;
    font-size: 24px;
    color: #161513;
    background: #fdfcfb;
    border: 2px solid #dcdbd8;
    box-shadow: 0 2px 5px rgba(0, 0, 0, .08);
}
.item svg {
    stroke: #6d6c68;
    stroke-width: 1.500;
}
.zone-sub {
    height: 58px;
}
.zone-62 {
    height: 62px;
}
.zone-59 {
    height: 59px;
    margin-bottom: 10px;
}
.region-map .drops:last-child {
    margin-bottom: 0;
}
.slot-main {
    flex: none;
    width: 846px;
    margin-left: 6px;
    margin-top: -40px;
    display: flex;
    flex-direction: column;
    gap: 13px;
}
.page-slot {
    border: 2px dotted rgba(0, 0, 0, .09);
    border-radius: 4px;
    padding: 0 17px;
}
.slot-top {
    height: 45px;
}
.slot-body {
    height: 527px;
}
.slot-footer {
    height: 63px;
}
.slot-title {
    font-size: 20px;
    font-weight: 600;
    letter-spacing: 0;
    text-transform: uppercase;
    margin-left: -3px;
}
.slot-body .slot-title {
    height: 58px;
    padding-top: 15px;
}
.slot-footer .slot-title {
    padding-top: 15px;
}
.region-map {
    height: 448px;
    margin-right: 0;
}
.track-canvas {
    width: 29px;
    padding-left: 6px;
    padding-top: 223px;
    border-left: 2px solid #e7e6e3;
}
.track-canvas .thumb {
    width: 15px;
    height: 270px;
    border-radius: 8px;
}
.gutter-h {
    flex: none;
    height: 16px;
    background: #e9e8e5;
    display: flex;
    align-items: center;
    justify-content: center;
}
.tri-down {
    border-left: 8px solid transparent;
    border-right: 8px solid transparent;
    border-top: 8px solid #252320;
}

/* gallery */
.gallery {
    flex: 1;
    min-height: 0;
    display: flex;
    flex-direction: column;
}
.gallery-tabs {
    flex: none;
    height: 83px;
    display: flex;
    align-items: center;
    padding-left: 16px;
    padding-right: 38px;
    gap: 16px;
    border-bottom: 2px solid #e8e7e4;
}
.gallery-tabs .small-chev {
    margin-left: -7px;
}
.pick {
    height: 48px;
    padding: 0 23px;
    font-size: 24px;
    letter-spacing: -0.5px;
    color: #312d2a;
    background: #f1f0ed;
    border: 2px solid #dddcd9;
    border-radius: 4px;
}
.pick-on {
    color: #fff;
    background: #0e0d0b;
    border-color: #0e0d0b;
}
.gallery-body {
    flex: 1;
    min-height: 0;
    display: flex;
    overflow: hidden;
}
.grid {
    width: 1311px;
    height: 500px;
    margin-top: -18px;
    padding-left: 19px;
    display: grid;
    grid-template-columns: repeat(5, 262px);
    grid-auto-rows: 96px;
}
.cell {
    display: flex;
    align-items: center;
    gap: 17px;
    font-size: 22px;
    letter-spacing: -0.5px;
    line-height: 32px;
    color: #6b6a66;
}
.cell span {
    max-width: 150px;
    margin-bottom: 2px;
}
.gi {
    width: 60px;
    height: 70px;
    overflow: visible;
    stroke: #b8b7b3;
    stroke-width: 2;
}
.track-gallery {
    width: 29px;
    padding-left: 6px;
    padding-top: 22px;
    border-left: 2px solid #e7e6e3;
}
.track-gallery .thumb {
    width: 16px;
    height: 437px;
    border-radius: 8px;
}

/* property editor */
.filter-row {
    flex: none;
    height: 98px;
    display: flex;
    align-items: center;
    padding-left: 16px;
}
.filter {
    width: 548px;
    height: 64px;
    padding-left: 17px;
    display: flex;
    align-items: center;
    gap: 15px;
    color: #8a8985;
    background: #fcfbf9;
    border-radius: 3px;
    box-shadow: 0 2px 4px rgba(0, 0, 0, .12);
}
.filter span {
    margin-bottom: 2px;
}
.ico-search {
    stroke: #6d6c68;
    stroke-width: 2;
}
.go-icon {
    margin-left: 57px;
    stroke: #a3a29e;
    stroke-width: 2;
}
.off-chev {
    margin-left: 8px;
    stroke: #a3a29e;
}
.props-empty {
    flex: 1;
    padding-top: 547px;
    display: flex;
    flex-direction: column;
    align-items: center;
    background: #e4e3df;
}
.props-empty p {
    margin: 20px 0 0;
    line-height: 32px;
    letter-spacing: -0.5px;
    color: #312d2a;
}
.warn {
    fill: #625f5c;
}
.warn-mark {
    stroke: #e4e3df;
    stroke-width: 5;
    stroke-linecap: round;
}
.warn-dot {
    fill: #e4e3df;
}

.footer-strip {
    height: 34px;
    background: #fcfcfa;
    position: relative;
}

/* overlays */
.context-menu {
    position: absolute;
    left: 433px;
    top: 1153px;
    width: 382px;
    height: 96px;
    padding-top: 17px;
    background: #fbfaf8;
    border: 1px solid #eeede9;
    border-radius: 4px;
    letter-spacing: 0;
    box-shadow: 0 20px 40px rgba(0, 0, 0, .14);
}
.context-item {
    height: 64px;
    padding-left: 63px;
    padding-bottom: 2px;
    display: flex;
    align-items: center;
    background: #f0efed;
}
.callout {
    position: absolute;
    left: 335px;
    top: 1106px;
    width: 471px;
    height: 143px;
    border: 11px solid #ef4123;
}
```
